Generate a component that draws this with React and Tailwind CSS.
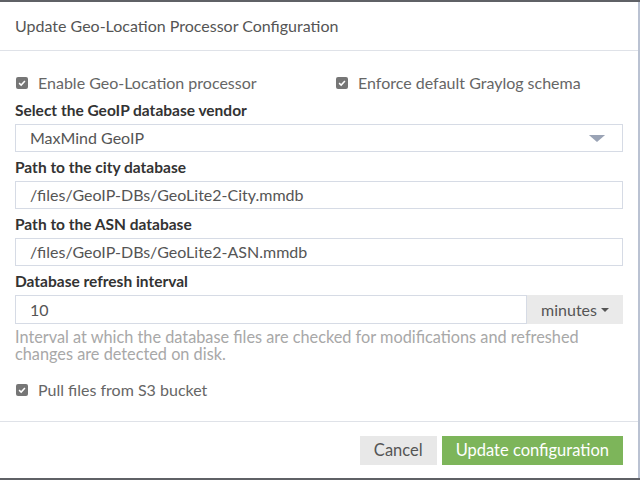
import React from 'react';

const font = { fontFamily: 'Lato, "Open Sans", sans-serif' };

const Check = ({ label }) => (
  <label className="h-[20px] flex items-center gap-[10px] text-[16px] text-[#666]">
    <span className="w-[12px] h-[12px] rounded-[2px] bg-[#767676] flex items-center justify-center">
      <svg viewBox="0 0 12 12" className="w-[10px] h-[10px]">
        <path d="M2.5 6.2 L5 8.5 L9.5 3.5" fill="none" stroke="#fff" strokeWidth="1.8" />
      </svg>
    </span>
    {label}
  </label>
);

const Label = ({ children }) => (
  <div className="text-[15.5px] font-bold text-[#333] h-[20px] leading-[20px] mb-[4px]">{children}</div>
);

const Field = ({ value }) => (
  <div className="h-[28px] border border-[#d6dbe5] px-[14px] flex items-center text-[16px] text-[#555] mb-[5px]">
    {value}
  </div>
);

export default function App() {
  return (
    <div className="w-[640px] h-[480px] bg-[#5f6166] pt-[2px] pb-[2px] overflow-hidden" style={font}>
      <div className="h-full bg-white border-r-[2px] border-[#bac2d2] flex flex-col">
        <div className="h-[49px] shrink-0 px-[15px] flex items-center border-b border-[#dfe2e8]">
          <h2 className="text-[16px] text-[#555]">Update Geo-Location Processor Configuration</h2>
        </div>

        <div className="flex-1 px-[15px] pt-[22px]">
          <div className="flex mb-[7px] pl-[1px]">
            <div className="w-[320px]"><Check label="Enable Geo-Location processor" /></div>
            <Check label="Enforce default Graylog schema" />
          </div>

          <Label>Select the GeoIP database vendor</Label>
          <div className="h-[28px] border border-[#d6dbe5] px-[14px] flex items-center justify-between text-[16px] text-[#555] mb-[5px]">
            <span>MaxMind GeoIP</span>
            <svg viewBox="0 0 20 10" className="w-[18px] h-[9px] mr-[2px]">
              <path d="M1 1 L19 1 L10 9 Z" fill="#9aa3b5" />
            </svg>
          </div>

          <Label>Path to the city database</Label>
          <Field value="/files/GeoIP-DBs/GeoLite2-City.mmdb" />

          <Label>Path to the ASN database</Label>
          <Field value="/files/GeoIP-DBs/GeoLite2-ASN.mmdb" />

          <Label>Database refresh interval</Label>
          <div className="flex h-[29px]">
            <div className="flex-1 border border-[#d6dbe5] px-[14px] flex items-center text-[16px] text-[#555]">10</div>
            <div className="w-[96px] bg-[#eaeaea] flex items-center justify-center gap-[4px] text-[16px] text-[#555]">
              minutes
              <svg viewBox="0 0 8 4" className="w-[8px] h-[4px]"><path d="M0 0 L8 0 L4 4 Z" fill="#555" /></svg>
            </div>
          </div>
          <p className="mt-[4px] max-w-[585px] text-[16.3px] leading-[17px] text-[#a8a8a8]">
            Interval at which the database files are checked for modifications and refreshed changes are detected on disk.
          </p>

          <div className="mt-[18px] pl-[1px]">
            <Check label="Pull files from S3 bucket" />
          </div>
        </div>

        <div className="h-[57px] shrink-0 border-t border-[#dfe2e8] px-[15px] flex items-center justify-end gap-[5px]">
          <button className="h-[29px] px-[14px] bg-[#e8e8e8] text-[16.5px] text-[#555]">Cancel</button>
          <button className="h-[29px] px-[14px] bg-[#7db55a] text-[16.5px] text-white">Update configuration</button>
        </div>
      </div>
    </div>
  );
}
